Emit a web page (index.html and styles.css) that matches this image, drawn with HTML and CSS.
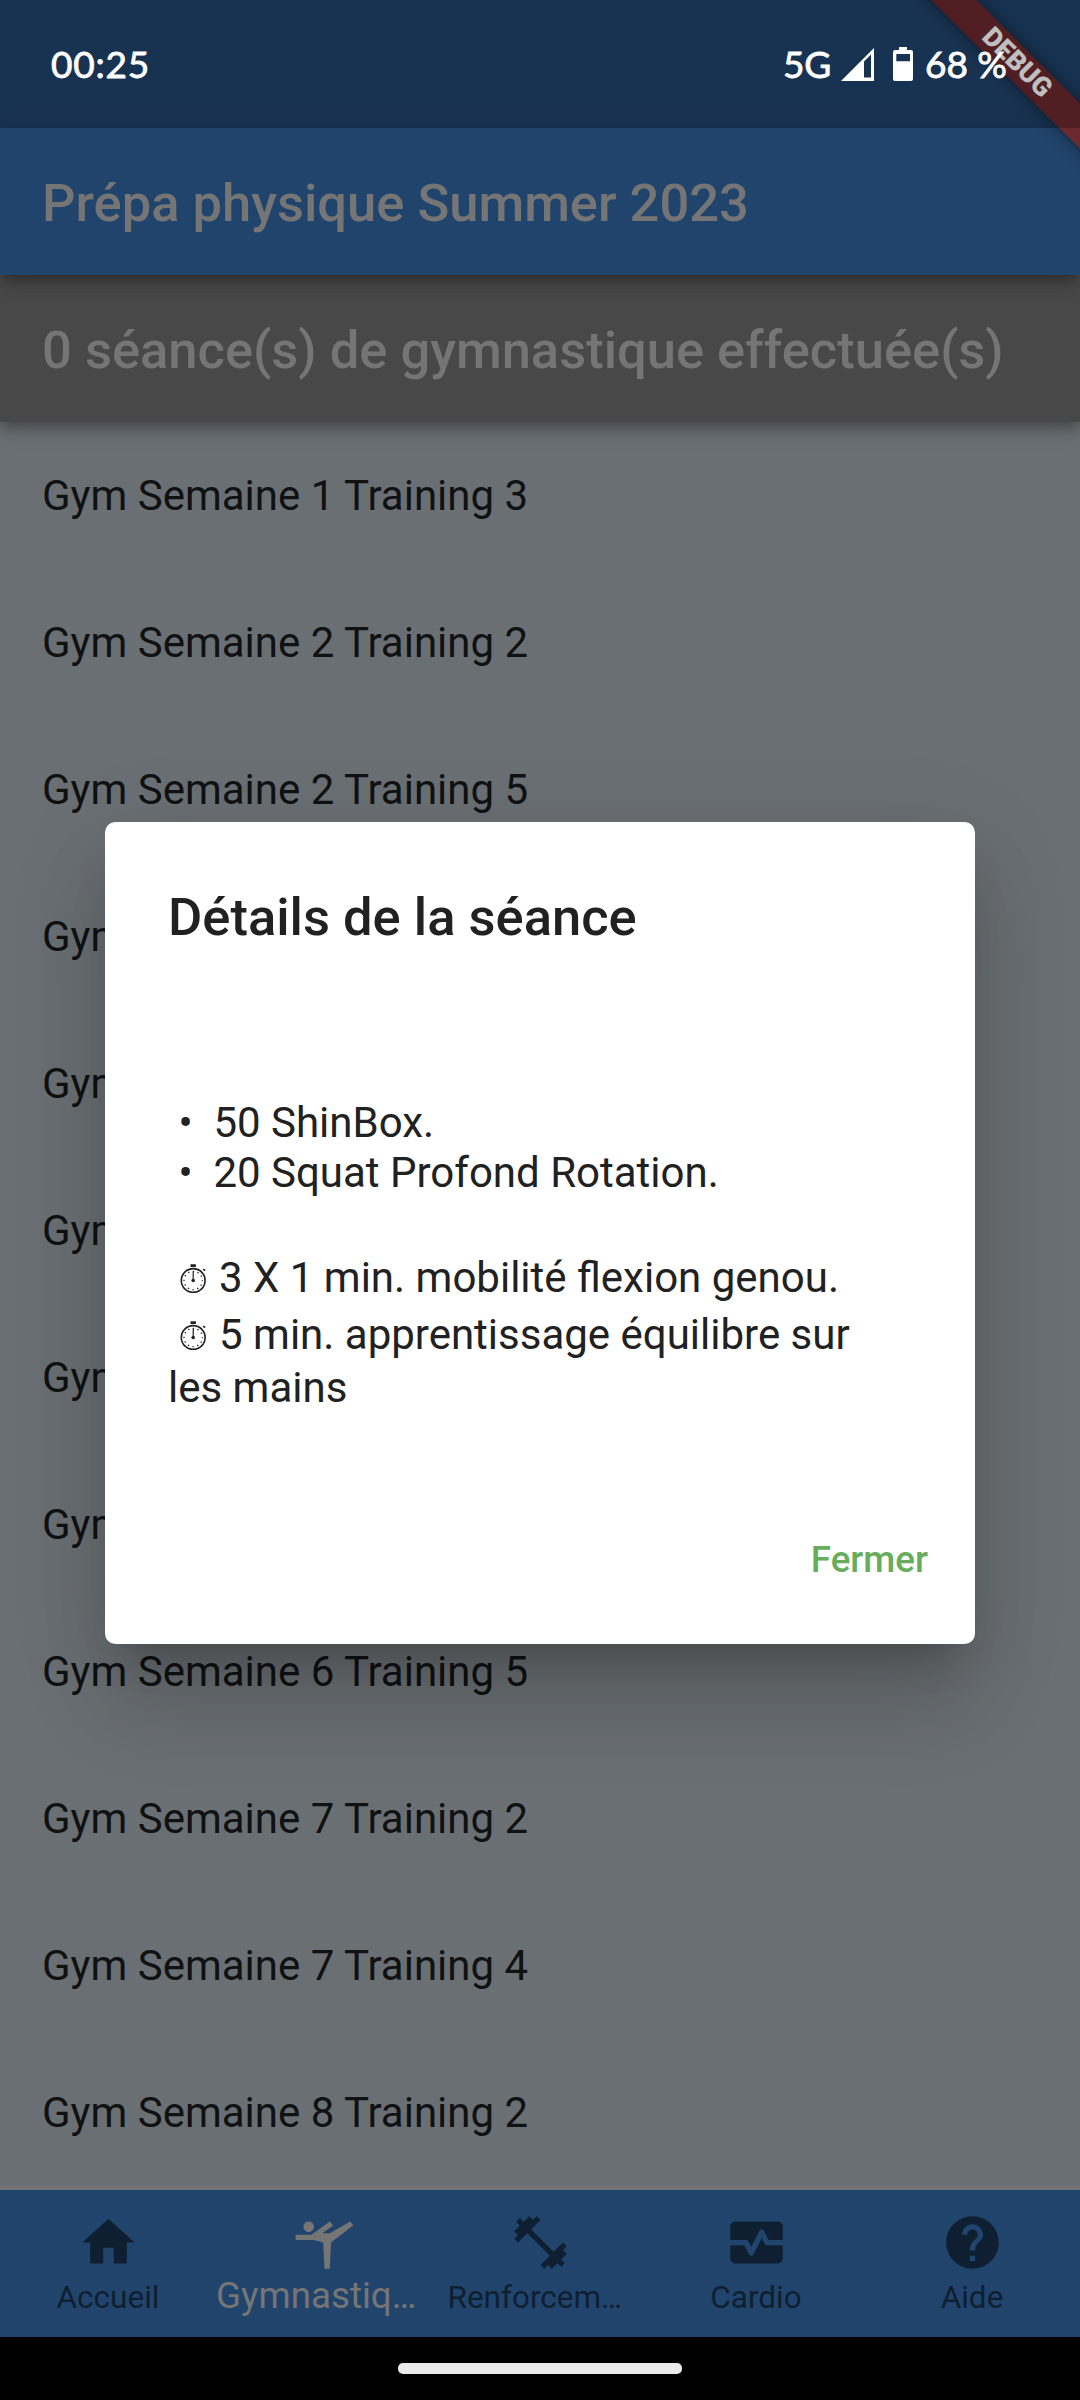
FILE: index.html
```html
<!DOCTYPE html>
<html lang="fr">
<head>
  <meta charset="utf-8">
  <title>Prépa physique Summer 2023</title>
  <link rel="stylesheet" href="styles.css">
</head>
<body>
  <div class="phone">
    <div class="statusbar">
      <span class="clock">00:25</span>
      <div class="indicators">
        <span class="network">5G</span>
        <svg class="signal" viewBox="0 0 33 33"><path fill-rule="evenodd" d="M0 33 33 0V33ZM23 13.500V29.500H30V6.500Z"/></svg>
        <svg class="battery" viewBox="0 0 20 34"><path fill-rule="evenodd" d="M6 0H14V3H18Q20 3 20 5V32Q20 34 18 34H2Q0 34 0 32V5Q0 3 2 3H6ZM3.300 7V14.300H17V7Z"/></svg>
        <span class="percent">68 %</span>
      </div>
    </div>

    <header class="appbar">Prépa physique Summer 2023</header>
    <div class="counter">0 séance(s) de gymnastique effectuée(s)</div>

    <ul class="sessions">
      <li>Gym Semaine 1 Training 3</li>
      <li>Gym Semaine 2 Training 2</li>
      <li>Gym Semaine 2 Training 5</li>
      <li>Gym Semaine 3 Training 3</li>
      <li>Gym Semaine 4 Training 2</li>
      <li>Gym Semaine 4 Training 4</li>
      <li>Gym Semaine 5 Training 3</li>
      <li>Gym Semaine 6 Training 2</li>
      <li>Gym Semaine 6 Training 5</li>
      <li>Gym Semaine 7 Training 2</li>
      <li>Gym Semaine 7 Training 4</li>
      <li>Gym Semaine 8 Training 2</li>
    </ul>

    <nav class="tabs">
      <div class="tab">
        <svg viewBox="0 0 24 24"><path d="M10 20v-6h4v6h5v-8h3L12 3 2 12h3v8z"/></svg>
        <span>Accueil</span>
      </div>
      <div class="tab selected">
        <svg viewBox="0 0 24 24"><path d="M4,6c0-1.100,0.900-2,2-2s2,0.900,2,2S7.100,8,6,8S4,7.100,4,6z M1,9h6l7-5l1.310,1.520L11.140,8.500H14L21.800,4L23,5.400L14.500,12L14,22h-2l-0.500-10L8,11H1V9z"/></svg>
        <span>Gymnastiq…</span>
      </div>
      <div class="tab">
        <svg viewBox="0 0 24 24"><path d="M20.570 14.860L22 13.430 20.570 12 17 15.570 8.430 7 12 3.430 10.570 2 9.140 3.430 7.710 2 5.570 4.140 4.140 2.710 2.710 4.140l1.430 1.430L2 7.710l1.430 1.430L2 10.570 3.430 12 7 8.430 15.570 17 12 20.570 13.430 22l1.430-1.430L16.290 22l2.140-2.140 1.430 1.430 1.430-1.430-1.430-1.430L22 16.290z"/></svg>
        <span>Renforcem…</span>
      </div>
      <div class="tab">
        <svg viewBox="0 0 24 24"><path d="M15.110,12.450L14,10.240l-3.110,6.210C10.730,16.790,10.380,17,10,17s-0.730-0.210-0.890-0.550L7.380,13H2v5c0,1.100,0.900,2,2,2h16c1.100,0,2-0.900,2-2v-5h-6C15.620,13,15.270,12.790,15.110,12.450z M20,4H4C2.900,4,2,4.900,2,6v5h6c0.380,0,0.730,0.210,0.890,0.550L10,13.760l3.110-6.210c0.340-0.680,1.450-0.680,1.790,0L16.620,11H22V6C22,4.900,21.100,4,20,4z"/></svg>
        <span>Cardio</span>
      </div>
      <div class="tab">
        <svg viewBox="0 0 24 24"><path d="M12 2C6.480 2 2 6.480 2 12s4.480 10 10 10 10-4.480 10-10S17.520 2 12 2zm1 17h-2v-2h2v2zm2.070-7.750l-.9.920C13.450 12.900 13 13.500 13 15h-2v-.5c0-1.100.45-2.100 1.170-2.830l1.240-1.260c.37-.36.59-.86.59-1.410 0-1.100-.9-2-2-2s-2 .9-2 2H8c0-2.210 1.790-4 4-4s4 1.790 4 4c0 .88-.36 1.680-.93 2.250z"/></svg>
        <span>Aide</span>
      </div>
    </nav>
    <div class="gesturebar"><div class="handle"></div></div>

    <section class="dialog">
      <h2>Détails de la séance</h2>
      <div class="exercises">
        <p> •  50 ShinBox.</p>
        <p> •  20 Squat Profond Rotation.</p>
      </div>
      <div class="timed">
        <p> <svg class="stopwatch"><use href="#stopwatch"/></svg> 3 X 1 min. mobilité flexion genou.</p>
        <p> <svg class="stopwatch"><use href="#stopwatch"/></svg> 5 min. apprentissage équilibre sur</p>
        <p class="wrapped">les mains</p>
      </div>
      <div class="close">Fermer</div>
    </section>

    <div class="corner"><div class="banner">DEBUG</div></div>
  </div>

  <svg class="defs">
    <g id="stopwatch">
      <circle cx="15.200" cy="18.500" r="11.900" fill="none" stroke="#212121" stroke-width="1.600"/>
      <circle cx="15.200" cy="18.500" r="9.200" fill="none" stroke="#212121" stroke-width="1.300" stroke-dasharray="1.300 3.517" stroke-dashoffset="0.650"/>
      <path d="M12.500 2.200h5.400v2.700h-5.400zM14.600 9.500h1.200v8h-1.200zM24.700 7.400l1.800 1.800 1.200-1.200-1.800-1.400z" fill="#212121"/>
      <circle cx="15.200" cy="18.500" r="1.800" fill="#212121"/>
    </g>
  </svg>
</body>
</html>
```
FILE: styles.css
```css
body {
  margin: 0;
  background: #000;
  font-family: Roboto, "Liberation Sans", sans-serif;
}

.phone {
  position: relative;
  display: flex;
  flex-direction: column;
  width: 1080px;
  height: 2400px;
  overflow: hidden;
  background: #21446c;
}

/* status bar: translucent shade drawn over the app and its corner banner */
.statusbar {
  position: relative;
  z-index: 3;
  box-sizing: border-box;
  flex: none;
  display: flex;
  justify-content: space-between;
  align-items: center;
  height: 128px;
  padding: 0 73px 0 51px;
  background: rgba(0, 0, 0, .25);
  color: #fff;
  font-family: Lato, Roboto, sans-serif;
  font-size: 37px;
  line-height: 44px;
  -webkit-text-stroke: .8px #fff;
}

.clock { letter-spacing: .8px; }

.indicators { display: flex; align-items: center; }
.network { letter-spacing: -.3px; }
.signal { width: 33px; height: 33px; margin-left: 10px; fill: #fff; }
.battery { width: 20px; height: 34px; margin: 0 12px 0 19px; fill: #fff; }

.appbar,
.counter {
  flex: none;
  box-sizing: border-box;
  height: 147px;
  padding: 2px 42px 0;
  color: #757575;
  font-size: 52.5px;
  font-weight: 500;
  line-height: 147px;
  white-space: nowrap;
  box-shadow:
    0 5px 10px -3px rgba(0, 0, 0, .2),
    0 10px 13px 0 rgba(0, 0, 0, .14),
    0 3px 26px 0 rgba(0, 0, 0, .12);
}

.appbar { position: relative; z-index: 1; background: #21446c; }
.counter { position: relative; background: #484848; }

.sessions {
  flex: none;
  height: 1764px;
  margin: 0;
  padding: 0;
  border-bottom: 4px solid #737373;
  background: #6a6f73;
  list-style: none;
}

.sessions li {
  height: 147px;
  padding-left: 42px;
  color: #0f1112;
  font-size: 42px;
  line-height: 147px;
}

.tabs {
  flex: none;
  display: grid;
  grid-template-columns: repeat(5, 1fr);
  height: 147px;
  background: #21446c;
}

.tab {
  display: flex;
  flex-direction: column;
  align-items: center;
  padding-top: 21px;
  color: #0e1f31;
  fill: currentColor;
}

.tab svg { width: 63px; height: 63px; }

.tab span {
  max-width: 185px;
  margin-top: 5px;
  font-size: 31.5px;
  line-height: 38px;
}

.tab:nth-child(3) span { width: 185px; }

.tab.selected { color: #757575; }
.tab.selected span {
  width: 216px;
  max-width: none;
  margin-top: 0;
  font-size: 36.75px;
  line-height: 43px;
}

.gesturebar {
  flex: 1;
  display: flex;
  justify-content: center;
  background: #000;
}

.handle {
  width: 284px;
  height: 11px;
  margin-top: 26px;
  border-radius: 5px;
  background: #ebebeb;
}

.dialog {
  position: absolute;
  z-index: 2;
  left: 105px;
  top: 821.500px;
  box-sizing: border-box;
  width: 870px;
  height: 822px;
  padding: 64px 47px 0 63px;
  border-radius: 10.500px;
  background: #fff;
  color: #212121;
  box-shadow:
    0 29px 39px -18px rgba(0, 0, 0, .2),
    0 63px 90px 0 rgba(0, 0, 0, .12),
    0 24px 100px 8px rgba(0, 0, 0, .09);
}

.dialog h2 {
  margin: 0 0 150px;
  font-size: 52.5px;
  font-weight: 500;
  line-height: 62px;
}

.dialog p {
  margin: 0;
  font-size: 42px;
  line-height: 50px;
  white-space: pre;
}

.timed { margin-top: 51px; }
.timed p { line-height: 57px; }
.timed .wrapped { line-height: 50px; }

.stopwatch {
  width: 30.2px;
  height: 31px;
  vertical-align: -1px;
}

.close {
  margin-top: 125px;
  color: #67ad5b;
  font-size: 36.75px;
  font-weight: 500;
  line-height: 44px;
  text-align: right;
}

/* diagonal ribbon in the top right corner */
.corner {
  position: absolute;
  z-index: 2;
  top: 0;
  right: 0;
  width: 200px;
  height: 200px;
  overflow: hidden;
}

.banner {
  position: absolute;
  left: -13px;
  top: 47px;
  width: 300px;
  height: 31.500px;
  transform: rotate(45deg);
  background: #6c2930;
  box-shadow: 0 0 16px rgba(0, 0, 0, .5);
  color: #fff;
  font-size: 26.8px;
  font-weight: 900;
  line-height: 31.500px;
  text-align: center;
}

.defs { position: absolute; width: 0; height: 0; overflow: hidden; }
```
